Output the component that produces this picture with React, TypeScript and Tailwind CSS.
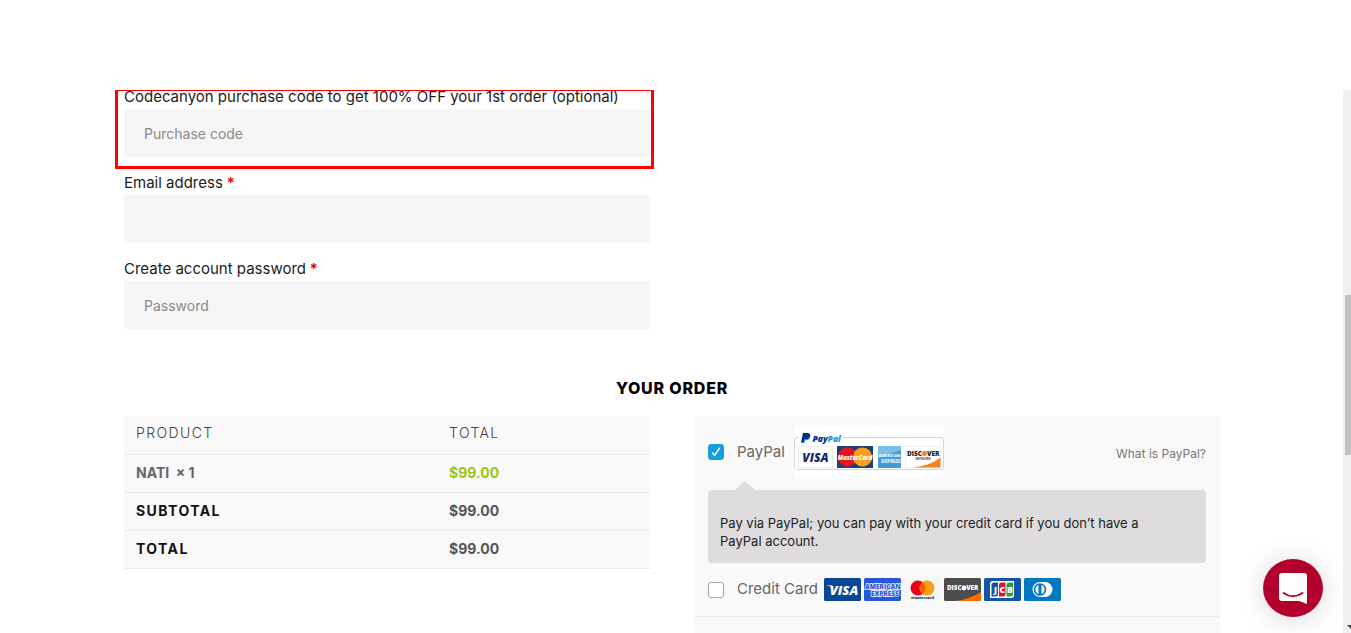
import { useState } from "react";
import type { ReactNode } from "react";

type FieldProps = {
  id: string;
  label: string;
  type: string;
  placeholder?: string;
  required?: boolean;
};

function Field({ id, label, type, placeholder, required }: FieldProps) {
  return (
    <div>
      <label htmlFor={id} className="block h-6 text-[15px] leading-6 text-[#1c1c1c]">
        {label}
        {required && <span className="font-bold text-[#f00]"> *</span>}
      </label>
      <input
        id={id}
        type={type}
        placeholder={placeholder}
        className="block h-12 w-full bg-[#f6f6f6] px-5 text-sm text-[#555] outline-none placeholder:text-[#8a8a8a]"
      />
    </div>
  );
}

function Tick({ id, checked, onChange }: { id: string; checked: boolean; onChange: () => void }) {
  return (
    <span className="grid size-4 shrink-0 place-items-center">
      <input
        id={id}
        type="checkbox"
        checked={checked}
        onChange={onChange}
        className="col-start-1 row-start-1 size-4 appearance-none rounded-[3px] border border-[#a3a3a3] bg-white checked:border-[#129fdb] checked:bg-[#129fdb]"
      />
      {checked && (
        <svg viewBox="0 0 16 16" className="pointer-events-none col-start-1 row-start-1 size-4" aria-hidden="true">
          <path d="M4.2 8.6 6.6 11.2 11.8 3.800" fill="none" stroke="#fff" strokeWidth="1.500" />
        </svg>
      )}
    </span>
  );
}

function PayPalMark() {
  return (
    <svg viewBox="0 0 150 50" className="h-[50px] w-[150px] shrink-0" fontFamily="Open Sans, sans-serif" role="img" aria-label="PayPal acceptance mark">
      <rect width="150" height="50" fill="#fff" />
      <rect x="0.5" y="10.5" width="149" height="32" rx="2.5" fill="#fff" stroke="#d6d6d8" />
      <rect x="5" y="6" width="44" height="10" fill="#fff" />
      <path d="M9 6h4.500c2.200 0 3.300 1.500 2.800 3.400-.5 2.200-2 3-4 3h-1.500l-.7 3H7z" fill="#003087" />
      <path d="M15.600 8.300c1.200 3-1 5-3.600 5h-1l-.7 3H8.500l-.3-1h1.900l.7-3h1.500c2.200 0 3-1.500 3.300-4z" fill="#129bdc" />
      <text x="18.500" y="14.500" fontSize="8.500" fontWeight="800" fontStyle="italic" fill="#003087">Pay<tspan fill="#129bdc">Pal</tspan></text>
      <rect x="4.500" y="19.500" width="34" height="21" fill="#fff" stroke="#eee" />
      <text x="21.500" y="34.500" fontSize="12" fontWeight="800" fontStyle="italic" textAnchor="middle" fill="#14286e">VISA</text>
      <rect x="43" y="19" width="36" height="22" fill="#1f3f7c" />
      <circle cx="53.500" cy="30" r="9.500" fill="#e9151d" />
      <circle cx="68.500" cy="30" r="9.500" fill="#f9a11b" />
      <text x="61" y="32.500" fontSize="6" fontWeight="800" fontStyle="italic" textAnchor="middle" fill="#fff">MasterCard</text>
      <rect x="84" y="19" width="23" height="22" fill="#3d9fd6" />
      <path d="M84 19h23v4L84 31z" fill="#78c0e6" />
      <text x="95.500" y="30" fontSize="4" fontWeight="800" textAnchor="middle" fill="#e7f5fd">AMERICAN</text>
      <text x="97" y="35.500" fontSize="4.500" fontWeight="800" textAnchor="middle" fill="#e7f5fd">EXPRESS</text>
      <rect x="111.500" y="19.500" width="35" height="21" fill="#fff" stroke="#eee" />
      <path d="M118 40.500c11-1 21-4 28.500-10v10z" fill="#f58220" />
      <circle cx="130.500" cy="26.500" r="2.500" fill="#f58220" />
      <text x="128" y="29" fontSize="6.500" fontWeight="800" textAnchor="end" fill="#222">DISC</text>
      <text x="133" y="29" fontSize="6.500" fontWeight="800" fill="#222">VER</text>
      <text x="129" y="33" fontSize="3" fontWeight="700" textAnchor="middle" fill="#444">NETWORK</text>
    </svg>
  );
}

function CardIcon({ name, fill, children }: { name: string; fill: string; children: ReactNode }) {
  return (
    <svg viewBox="0 0 37 23" className="h-[23px] w-[37px]" fontFamily="Open Sans, sans-serif" role="img" aria-label={name}>
      <rect width="37" height="23" rx="1.500" fill={fill} />
      {children}
    </svg>
  );
}

function CardIcons() {
  return (
    <span className="flex gap-[3px]">
      <CardIcon name="Visa" fill="#0b4595">
        <path d="M2.800 7h4.400c.9 0 1.200.5 1.400 1.200l1.200 5C8.500 10.300 6 8.300 2.800 7.500z" fill="#f8a11b" />
        <text x="20" y="16.500" fontSize="13" fontWeight="800" fontStyle="italic" textAnchor="middle" fill="#fff">VISA</text>
      </CardIcon>
      <CardIcon name="American Express" fill="#2557d6">
        <g fill="#2557d6" stroke="#fff" strokeWidth="1.300" paintOrder="stroke" fontWeight="800" fontSize="6.500">
          <text x="1" y="10.500">AMERICAN</text>
          <text x="7" y="18">EXPRESS</text>
        </g>
      </CardIcon>
      <CardIcon name="Mastercard" fill="#f5f5f5">
        <circle cx="14" cy="10" r="7.500" fill="#eb001b" />
        <circle cx="23" cy="10" r="7.500" fill="#f79e1b" />
        <path d="M18.500 4a7.500 7.500 0 0 1 0 12 7.500 7.500 0 0 1 0-12z" fill="#ff5f00" />
        <text x="18.500" y="21" fontSize="4" fontWeight="700" textAnchor="middle" fill="#111">mastercard</text>
      </CardIcon>
      <CardIcon name="Discover" fill="#4d4d4d">
        <path d="M11 23c9-1 18-4 26-9v7.500c0 1-.5 1.500-1.500 1.500z" fill="#ff6c00" />
        <circle cx="20" cy="10" r="2.400" fill="#fff" />
        <text x="17.500" y="12.300" fontSize="6.300" fontWeight="800" textAnchor="end" fill="#fff">DISC</text>
        <text x="22.200" y="12.300" fontSize="6.300" fontWeight="800" fill="#fff">VER</text>
      </CardIcon>
      <CardIcon name="JCB" fill="#1354a4">
        <path d="M6 20V6q0-3 3-3h21v14q0 3-3 3z" fill="#fff" />
        <path d="M7.500 18.500V7q0-2.500 2.500-2.500h4V16q0 2.500-2.500 2.500z" fill="#1354a4" />
        <path d="M15 18.500V7q0-2.500 2.500-2.500h4V16q0 2.500-2.500 2.500z" fill="#d5163a" />
        <path d="M22.500 18.500V7q0-2.500 2.500-2.500h4V16q0 2.500-2.500 2.500z" fill="#2b9f38" />
        <g fontSize="8.500" fontWeight="800" textAnchor="middle" fill="#fff">
          <text x="11.500" y="14.500">J</text>
          <text x="18.300" y="14.500">C</text>
          <text x="25.800" y="14.500">B</text>
        </g>
      </CardIcon>
      <CardIcon name="Diners Club" fill="#0079be">
        <path d="M16 4h5a7.500 7.500 0 0 1 0 15h-5a7.500 7.500 0 0 1 0-15z" fill="#fff" />
        <circle cx="16" cy="11.500" r="6.300" fill="#0079be" />
        <path d="M14.500 7a4.800 4.800 0 0 0 0 9zM17.500 7a4.800 4.800 0 0 1 0 9z" fill="#fff" />
      </CardIcon>
    </span>
  );
}

function OrderTable() {
  return (
    <table className="w-full table-fixed border-collapse self-start bg-[#f9f9f9] text-left text-sm">
      <thead>
        <tr className="h-[38px] border-b border-[#ececec] tracking-widest text-[#444]">
          <th scope="col" className="w-[313px] px-3 pb-1 pt-0 font-light">PRODUCT</th>
          <th scope="col" className="px-3 pb-1 pt-0 font-light">TOTAL</th>
        </tr>
      </thead>
      <tbody className="font-bold text-[#555]">
        <tr className="h-[38px] border-b border-[#ececec]">
          <td className="px-3 py-0 text-[#666]">NATI&nbsp; × 1</td>
          <td className="px-3 py-0 text-[#9bc713]">$99.00</td>
        </tr>
        <tr className="h-[38px] border-b border-[#ececec]">
          <th scope="row" className="px-3 py-0 tracking-widest text-[#111]">SUBTOTAL</th>
          <td className="px-3 py-0">$99.00</td>
        </tr>
        <tr className="h-[38px] border-b border-[#ececec]">
          <th scope="row" className="px-3 py-0 tracking-widest text-[#111]">TOTAL</th>
          <td className="px-3 py-0">$99.00</td>
        </tr>
      </tbody>
    </table>
  );
}

function PaymentPanel() {
  const [method, setMethod] = useState("paypal");
  return (
    <section className="h-[240px] bg-[#f9f9f9] pt-[11px]">
      <div className="px-3.5">
        <div className="flex h-[50px] items-center">
          <Tick id="paypal" checked={method === "paypal"} onChange={() => setMethod("paypal")} />
          <label htmlFor="paypal" className="ml-[13px] w-[57px] text-[15px] text-[#666]">PayPal</label>
          <PayPalMark />
          <a href="#about-paypal" className="ml-auto pt-1 text-xs text-[#777]">What is PayPal?</a>
        </div>
        <svg viewBox="0 0 20 9" className="ml-[27px] mt-1 block h-[9px] w-5" aria-hidden="true">
          <path d="M0 9 10 0 20 9z" fill="#dedcdd" />
        </svg>
        <p className="rounded-sm bg-[#dedcdd] pb-[13px] pl-3 pr-8 pt-6 text-[13px] leading-[18px] text-[#1c1c1c]">
          Pay via PayPal; you can pay with your credit card if you don’t have a PayPal account.
        </p>
      </div>
      <div className="flex h-[54px] items-center border-b border-[#ececec] px-3.5">
        <Tick id="card" checked={method === "card"} onChange={() => setMethod("card")} />
        <label htmlFor="card" className="ml-[13px] w-[87px] text-[15px] text-[#666]">Credit Card</label>
        <CardIcons />
      </div>
    </section>
  );
}

export default function App() {
  return (
    <div className="flex h-screen flex-col overflow-hidden bg-white font-['Inter',sans-serif]">
      <header className="h-[90px] shrink-0" />
      <div className="flex min-h-0 grow">
        <main className="h-full grow overflow-hidden pl-px">
          <div className="mx-auto max-w-[1096px]">
            <form className="grid grid-cols-2 gap-11">
              <div className="-mt-[5px] flex flex-col gap-3.5">
                <div className="relative">
                  <Field id="code" type="text" label="Codecanyon purchase code to get 100% OFF your 1st order (optional)" placeholder="Purchase code" />
                  <div className="pointer-events-none absolute -bottom-3 -left-[9px] -right-1 top-[3px] border-[3px] border-[#f00]" />
                </div>
                <Field id="email" type="email" label="Email address" required />
                <Field id="password" type="password" label="Create account password" placeholder="Password" required />
              </div>
            </form>
            <h3 className="mt-[47px] text-center text-base font-extrabold leading-6 tracking-wider text-black">YOUR ORDER</h3>
            <div className="mt-4 grid grid-cols-2 gap-11">
              <OrderTable />
              <PaymentPanel />
            </div>
          </div>
        </main>
        <div className="flex w-2 shrink-0 flex-col items-end bg-[#f0f0f0]">
          <div className="mt-[205px] h-40 w-1.5 bg-[#c1c1c1]" />
          <svg viewBox="0 0 6 4" className="mb-1 mt-auto h-1 w-1.5" aria-hidden="true">
            <path d="M2 0h4v4z" fill="#444" />
          </svg>
        </div>
      </div>
      <button
        type="button"
        aria-label="Open chat"
        className="fixed bottom-4 right-7 grid h-[58px] w-[60px] place-items-center rounded-[50%] bg-[#b3002d] shadow-[0_2px_28px_rgba(0,0,0,0.16)]"
      >
        <svg viewBox="0 0 28 31" className="h-[31px] w-7" aria-hidden="true">
          <path d="M3 0h22q3 0 3 3v28q-4-1.500-8-3H3q-3 0-3-3V3Q0 0 3 0z" fill="#fff" />
          <path d="M4.500 20q9.500 6.500 19 0" fill="none" stroke="#b3002d" strokeWidth="2" strokeLinecap="round" />
        </svg>
      </button>
    </div>
  );
}
